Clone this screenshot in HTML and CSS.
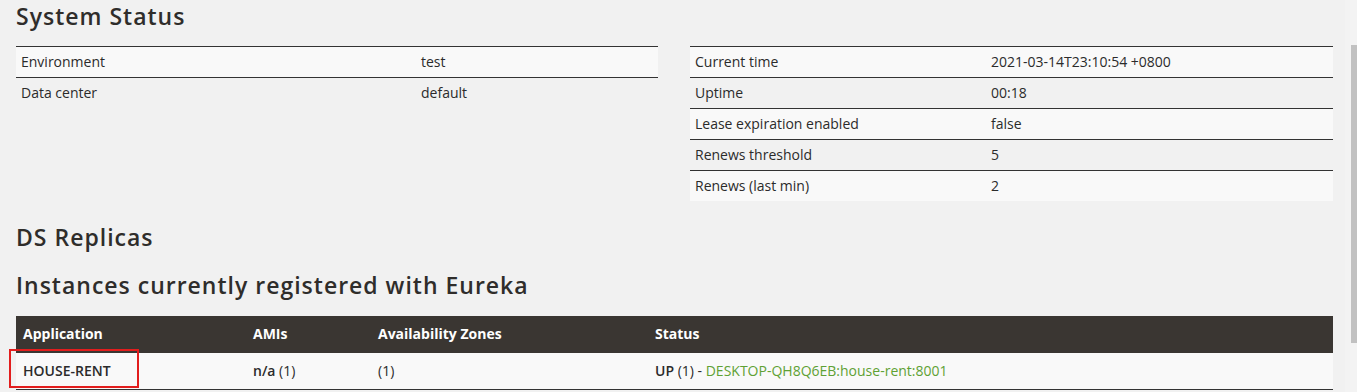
FILE: index.html
```html
<!DOCTYPE html>
<html lang="en">

<head>
    <meta charset="UTF-8">
    <meta name="viewport"
          content="width=device-width, initial-scale=1.0">
    <title>Eureka</title>
    <link rel="stylesheet" href="styles.css">
</head>

<body>
    <div id="page">
        <h1>System Status</h1>
        <div class="status-row">
            <table class="info-table left-table">
                <tbody>
                    <tr>
                        <td>Environment</td>
                        <td>test</td>
                    </tr>
                    <tr>
                        <td>Data center</td>
                        <td>default</td>
                    </tr>
                </tbody>
            </table>
            <table class="info-table right-table">
                <tbody>
                    <tr>
                        <td>Current time</td>
                        <td>2021-03-14T23:10:54 +0800</td>
                    </tr>
                    <tr>
                        <td>Uptime</td>
                        <td>00:18</td>
                    </tr>
                    <tr>
                        <td>Lease expiration enabled</td>
                        <td>false</td>
                    </tr>
                    <tr>
                        <td>Renews threshold</td>
                        <td>5</td>
                    </tr>
                    <tr>
                        <td>Renews (last min)</td>
                        <td>2</td>
                    </tr>
                </tbody>
            </table>
        </div>

        <h1 class="replicas">DS Replicas</h1>

        <h1 class="instances">Instances currently registered with Eureka</h1>
        <table id="instances">
            <thead>
                <tr>
                    <th class="col-app">Application</th>
                    <th class="col-ami">AMIs</th>
                    <th class="col-zone">Availability Zones</th>
                    <th>Status</th>
                </tr>
            </thead>
            <tbody>
                <tr>
                    <td class="app-cell"><b>HOUSE-RENT</b><span class="marker"></span></td>
                    <td><b>n/a</b> (1)</td>
                    <td>(1)</td>
                    <td><b>UP</b> (1) - <a href="#">DESKTOP-QH8Q6EB:house-rent:8001</a></td>
                </tr>
            </tbody>
        </table>
    </div>
    <div id="scrollbar">
        <div class="thumb"></div>
    </div>
</body>

</html>
```

FILE: styles.css
```css
body {
    margin: 0;
    padding: 0;
    height: 392px;
    overflow: hidden;
    display: flex;
    background-color: #f1f1f1;
    color: #2b2b2b;
    font-family: "Open Sans", "Noto Sans", sans-serif;
    font-size: 14px;
}

#page {
    width: 1317px;
    padding: 0 12px 0 16px;
}

h1 {
    margin: 0;
    font-family: "Open Sans", "Noto Sans", sans-serif;
    font-size: 23px;
    font-weight: 600;
    line-height: 32px;
    color: #2f2d2b;
    letter-spacing: 1px;
}

.status-row {
    display: flex;
    align-items: flex-start;
    justify-content: space-between;
    margin-top: 14px;
}

.info-table {
    border-collapse: collapse;
    border-top: 1px solid #333;
}

.left-table {
    width: 642px;
}

.left-table td:first-child {
    width: 390px;
}

.right-table {
    width: 643px;
}

.right-table td:first-child {
    width: 286px;
}

.info-table td {
    padding: 6px 5px;
    line-height: 18px;
}

.info-table tr + tr td {
    border-top: 1px solid #333;
}

.info-table tr:nth-child(odd) {
    background-color: #f9f9f9;
}

.replicas {
    margin-top: 20px;
}

.instances {
    margin-top: 16px;
}

#instances {
    width: 100%;
    margin-top: 15px;
    border-collapse: collapse;
}

#instances th {
    background-color: #3a3632;
    color: #fff;
    text-align: left;
    font-weight: bold;
    padding: 9px 7px 10px;
    line-height: 18px;
}

#instances td {
    background-color: #f9f9f9;
    padding: 9px 7px;
    line-height: 18px;
    border-bottom: 1px solid #333;
}

#instances b {
    font-weight: 600;
}

.col-app {
    width: 216px;
}

.col-ami {
    width: 111px;
}

.col-zone {
    width: 263px;
}

.app-cell {
    position: relative;
}

.marker {
    position: absolute;
    left: -7px;
    top: -4px;
    width: 126px;
    height: 35px;
    border: 2px solid #e21d1d;
}

a {
    color: #5fa134;
    text-decoration: none;
}

#scrollbar {
    width: 12px;
    background-color: #f3f3f3;
    padding-top: 45px;
}

.thumb {
    margin-left: 6px;
    width: 6px;
    height: 298px;
    background-color: #c1c1c1;
}
```
